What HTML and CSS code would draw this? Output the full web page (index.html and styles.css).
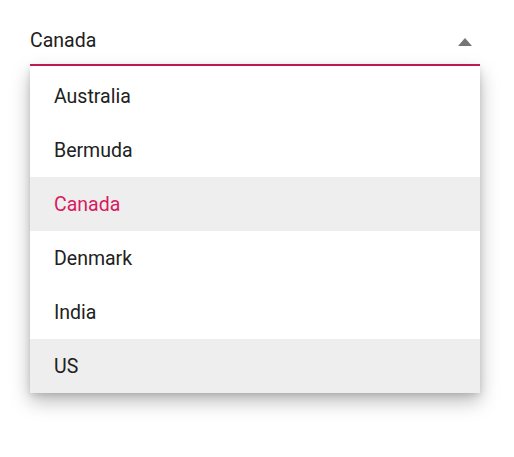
FILE: index.html
```html
<!DOCTYPE html>
<html lang="en">
<head>
  <meta charset="UTF-8" />
  <title>Dropdown</title>
  <link rel="stylesheet" href="styles.css">
</head>
<body>
  <div class="dropdown">
    <!-- selected value -->
    <div class="field">
      <span class="value">Canada</span>
      <svg class="arrow" width="14" height="8" viewBox="0 0 14 8"><path d="M0 8 L7 0 L14 8 Z" fill="#757575"/></svg>
    </div>
    <!-- popup list -->
    <ul class="popup">
      <li class="item">Australia</li>
      <li class="item">Bermuda</li>
      <li class="item selected">Canada</li>
      <li class="item">Denmark</li>
      <li class="item">India</li>
      <li class="item hover">US</li>
    </ul>
  </div>
</body>
</html>
```

FILE: styles.css
```css
html, body { height: 100%; }
body { margin: 0; background: #fff; font-family: Roboto, "Liberation Sans", sans-serif; color: #212121; }
.dropdown { width: 450px; margin: 0 0 0 30px; padding-top: 28px; }
.field { display: flex; align-items: flex-start; justify-content: space-between; height: 36px; border-bottom: 2px solid #cc1a5a; padding-right: 8px; }
.value { font-size: 19.5px; line-height: 24px; margin-top: 1px; }
.arrow { display: block; margin-top: 10px; }
.popup { list-style: none; margin: 0; padding: 3px 0 0; background: #fff; box-shadow: 0 8px 18px rgba(0, 0, 0, 0.28), 0 2px 6px rgba(0, 0, 0, 0.12); }
.item { height: 54px; line-height: 55px; padding-left: 24px; font-size: 19.5px; }
.selected { background: #eeeeee; color: #d81b60; }
.hover { background: #eeeeee; }
```
